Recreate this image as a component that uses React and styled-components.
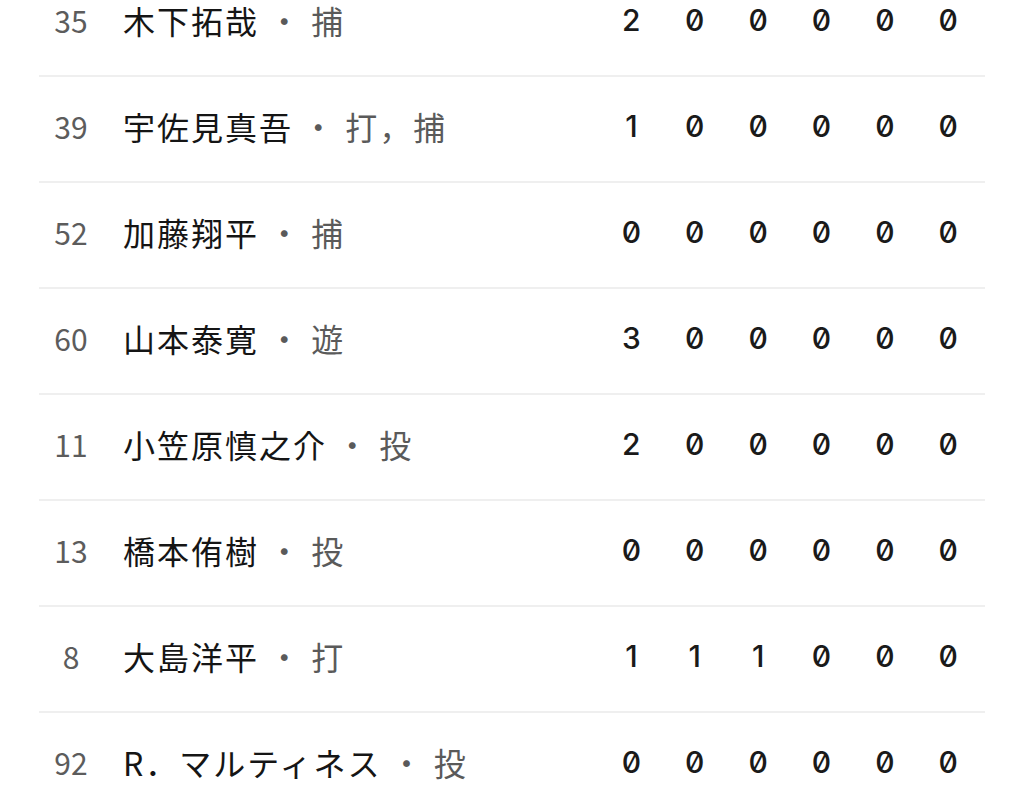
import React from "react";
import styled, { createGlobalStyle } from "styled-components";

const Global = createGlobalStyle`
  html, body { margin: 0; padding: 0; background: #ffffff; }
  body { font-family: "Noto Sans CJK JP", "Noto Sans", sans-serif; overflow: hidden; }
`;

const List = styled.div`
  margin: -29px 39px 0 39px;
  display: flex;
  flex-direction: column;
`;

const Row = styled.div`
  box-sizing: border-box;
  height: 106px;
  display: flex;
  align-items: center;
  border-bottom: 2px solid #efefef;
  padding: 0 5px 6px 0;
`;

const Num = styled.div`
  width: 64px;
  text-align: center;
  font-size: 30px;
  color: #5c5c5c;
`;

const Name = styled.div`
  flex: 1;
  margin-left: 20px;
  font-size: 32px;
  letter-spacing: 2px;
  color: #151515;
  white-space: pre;
`;

const Pos = styled.span`
  color: #5a5a5a;
`;

const Stats = styled.div`
  display: grid;
  grid-template-columns: repeat(6, 63.4px);
`;

const Stat = styled.div`
  text-align: center;
  font-family: "Inter", "DejaVu Sans", sans-serif;
  font-feature-settings: "zero" 1;
  font-variant-numeric: slashed-zero;
  font-size: 30px;
  font-weight: 500;
  color: #1a1a1a;
`;

const rows = [
  { no: "35", name: "木下拓哉", pos: "捕", stats: [2, 0, 0, 0, 0, 0] },
  { no: "39", name: "宇佐見真吾", pos: "打，捕", stats: [1, 0, 0, 0, 0, 0] },
  { no: "52", name: "加藤翔平", pos: "捕", stats: [0, 0, 0, 0, 0, 0] },
  { no: "60", name: "山本泰寛", pos: "遊", stats: [3, 0, 0, 0, 0, 0] },
  { no: "11", name: "小笠原慎之介", pos: "投", stats: [2, 0, 0, 0, 0, 0] },
  { no: "13", name: "橋本侑樹", pos: "投", stats: [0, 0, 0, 0, 0, 0] },
  { no: "8", name: "大島洋平", pos: "打", stats: [1, 1, 1, 0, 0, 0] },
  { no: "92", name: "R．マルティネス", pos: "投", stats: [0, 0, 0, 0, 0, 0] },
];

export default function App() {
  return (
    <>
      <Global />
      <List>
        {rows.map((r) => (
          <Row key={r.no}>
            <Num>{r.no}</Num>
            <Name>
              {r.name}
              <Pos> ・ {r.pos}</Pos>
            </Name>
            <Stats>
              {r.stats.map((s, i) => (
                <Stat key={i}>{s}</Stat>
              ))}
            </Stats>
          </Row>
        ))}
      </List>
    </>
  );
}
